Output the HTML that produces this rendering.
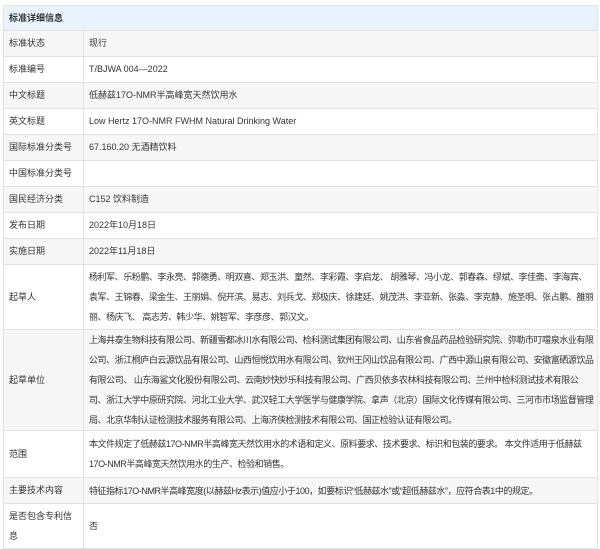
<!DOCTYPE html>
<html><head><meta charset="utf-8"><style>
body{margin:0;background:#fff;font-family:"Liberation Sans","Noto Sans CJK SC",sans-serif;font-size:9px;color:#333;overflow:hidden;}
table{position:absolute;left:3px;top:5px;width:594px;border-collapse:collapse;table-layout:fixed;}
td{border:1px solid #e2e2e2;padding:0 5px;vertical-align:middle;line-height:20.5px;overflow:hidden;}
td.t{letter-spacing:-0.45px;line-height:20px;white-space:nowrap;}
tr.h td{background:#e8f3fd;font-weight:bold;height:24px;}
tr.g td{background:#f7f7f7;}
tr.s td{height:25px;}
</style></head><body>
<table>
<colgroup><col style="width:80px"><col style="width:514px"></colgroup>
<tr class="h"><td colspan="2">标准详细信息</td></tr>
<tr class="s g"><td>标准状态</td><td>现行</td></tr>
<tr class="s"><td>标准编号</td><td>T/BJWA 004—2022</td></tr>
<tr class="s g"><td>中文标题</td><td>低赫兹17O-NMR半高峰宽天然饮用水</td></tr>
<tr class="s"><td>英文标题</td><td>Low Hertz 17O-NMR FWHM Natural Drinking Water</td></tr>
<tr class="s g"><td>国际标准分类号</td><td>67.160.20 无酒精饮料</td></tr>
<tr class="s"><td>中国标准分类号</td><td></td></tr>
<tr class="s g"><td>国民经济分类</td><td>C152 饮料制造</td></tr>
<tr class="s"><td>发布日期</td><td>2022年10月18日</td></tr>
<tr class="s g"><td>实施日期</td><td>2022年11月18日</td></tr>
<tr><td style="height:64px">起草人</td><td class="t">杨利军、乐粉鹏、李永亮、郭德勇、明双喜、郑玉洪、童然、李彩霞、李启龙、 胡雅琴、冯小龙、郭春森、缪斌、李佳斋、李海宾、<br>袁军、王锦春、梁金生、王丽娟、倪开滨、易志、刘兵戈、郑极庆、徐建廷、姚茂洪、李亚新、张淼、李克静、施圣明、张占鹏、雒丽<br>丽、杨庆飞、 高志芳、韩少华、姚智军、李彦彦、郭汉文。</td></tr>
<tr class="g"><td style="height:99px">起草单位</td><td class="t">上海井泰生物科技有限公司、新疆雪都冰川水有限公司、检科测试集团有限公司、山东省食品药品检验研究院、弥勒市叮噹泉水业有限<br>公司、浙江桐庐白云源饮品有限公司、山西恒悦饮用水有限公司、钦州王冈山饮品有限公司、广西中源山泉有限公司、安徽富硒源饮品<br>有限公司、 山东海鲨文化股份有限公司、云南妙快妙乐科技有限公司、广西贝依多农林科技有限公司、兰州中检科测试技术有限公<br>司、浙江大学中原研究院、河北工业大学、武汉轻工大学医学与健康学院、拿声（北京）国际文化传媒有限公司、三河市市场监督管理<br>局、北京华制认证检测技术服务有限公司、上海济侠检测技术有限公司、国正检验认证有限公司。</td></tr>
<tr><td style="height:46px">范围</td><td class="t">本文件规定了低赫兹17O-NMR半高峰宽天然饮用水的术语和定义、原料要求、技术要求、标识和包装的要求。 本文件适用于低赫兹<br>17O-NMR半高峰宽天然饮用水的生产、检验和销售。</td></tr>
<tr class="s g"><td>主要技术内容</td><td class="t">特征指标17O-NMR半高峰宽度(以赫兹Hz表示)值应小于100，如要标识“低赫兹水”或“超低赫兹水”，应符合表1中的规定。</td></tr>
<tr><td style="height:44px">是否包含专利信<br>息</td><td>否</td></tr>
</table>
</body></html>
